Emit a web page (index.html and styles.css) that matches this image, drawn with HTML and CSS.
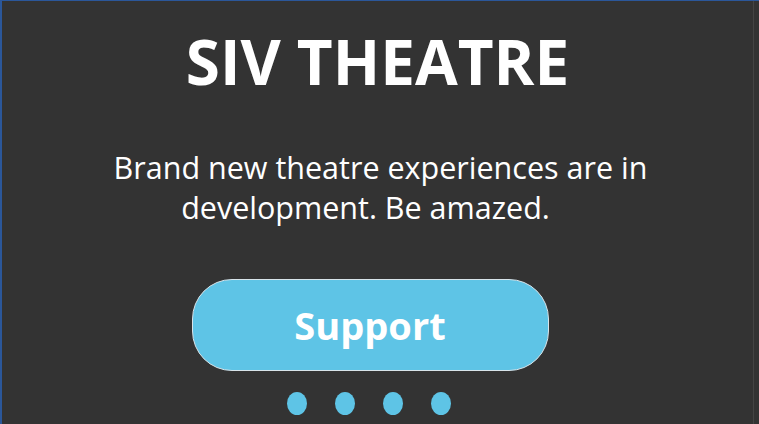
FILE: index.html
```
<!DOCTYPE html>
<html>
<head>
<meta charset="utf-8">
<link rel="stylesheet" href="styles.css">
</head>
<body>
<div class="frame">
  <main class="hero">
    <h1 class="title">SIV THEATRE</h1>
    <p class="lead"><span class="line">Brand new theatre experiences are in</span><span class="line line-2">development. Be amazed.</span></p>
    <button class="cta">Support</button>
    <div class="dots">
      <span class="dot"></span><span class="dot"></span><span class="dot"></span><span class="dot"></span>
    </div>
  </main>
  <div class="edge"></div>
</div>
</body>
</html>
```
FILE: styles.css
```
html, body {
  margin: 0;
  padding: 0;
  height: 100%;
  background: #333333;
  overflow: hidden;
}
.frame {
  display: flex;
  height: 424px;
  box-sizing: border-box;
  border-top: 1px solid #2b579a;
  border-left: 2px solid #2b579a;
  font-family: "Open Sans", "Noto Sans", sans-serif;
  color: #ffffff;
}
.hero {
  flex: 1;
  display: flex;
  flex-direction: column;
  align-items: center;
}
.edge {
  width: 5px;
  border-left: 1px solid #444444;
}
.title {
  margin: 18px 0 0 0;
  font-size: 62px;
  font-weight: 700;
  line-height: 84px;
  letter-spacing: 0;
}
.lead {
  margin: 44px 0 0 6px;
  font-size: 30.5px;
  line-height: 40px;
  font-weight: 400;
  text-align: center;
}
.line { display: block; }
.line-2 { margin-right: 30px; }
.cta {
  margin-top: 52px;
  width: 357px;
  height: 92px;
  border-radius: 40px;
  background: #5ec4e6;
  border: 1px solid #d8e4ea;
  color: #ffffff;
  font-family: "Open Sans", "Noto Sans", sans-serif;
  font-weight: 700;
  font-size: 38px;
  padding: 0;
  margin-left: -15px;
}
.dots {
  display: flex;
  gap: 28px;
  margin-top: 21px;
  margin-left: -18px;
}
.dot {
  width: 20px;
  height: 23px;
  border-radius: 50%;
  background: #5ec4e6;
}
```
